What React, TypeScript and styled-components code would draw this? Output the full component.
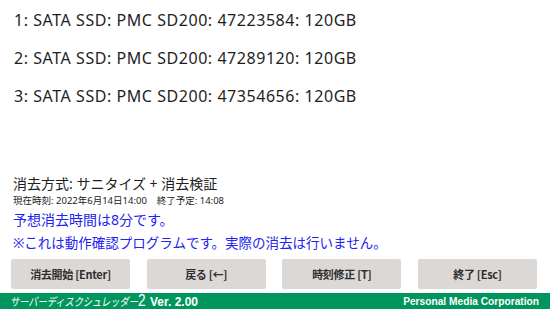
import React from 'react'
import styled, { createGlobalStyle } from 'styled-components'

const GlobalStyle = createGlobalStyle`
  html, body {
    margin: 0;
    padding: 0;
    background: #fff;
  }
  body {
    font-family: "Noto Sans", "Noto Sans CJK JP", sans-serif;
  }
`

const Screen = styled.div`
  width: 550px;
  height: 309px;
  display: flex;
  flex-direction: column;
  background: #fff;
  overflow: hidden;
`

const DriveList = styled.ul`
  list-style: none;
  margin: 0;
  padding: 1px 0 0 14px;
`

const Drive = styled.li`
  font-size: 16px;
  letter-spacing: 0.55px;
  line-height: 38px;
  color: #1e1e1e;
  white-space: nowrap;
`

const Info = styled.div`
  margin-top: auto;
  padding-left: 13px;
  display: flex;
  flex-direction: column;
`

const Method = styled.div`
  font-size: 14px;
  line-height: 20px;
  color: #1e1e1e;
`

const Clock = styled.div`
  font-size: 9.5px;
  line-height: 14px;
  color: #222;
  white-space: pre;
`

const Notice = styled.div<{ $h: number; $size: number }>`
  font-size: ${p => p.$size}px;
  line-height: ${p => p.$h}px;
  color: #2222f2;
  white-space: nowrap;
`

const Buttons = styled.div`
  display: grid;
  grid-template-columns: repeat(4, 119px);
  justify-content: space-between;
  padding: 0 13px 0 11px;
  margin-top: 4px;
`

const Button = styled.button`
  height: 30px;
  border: none;
  border-radius: 2px;
  background: #dcd8d6;
  color: #2e2e2e;
  font-family: "Noto Sans CJK JP", sans-serif;
  font-size: 11px;
  font-weight: 700;
  letter-spacing: -0.3px;
  padding: 0;
  cursor: pointer;
`

const Footer = styled.div`
  margin-top: 4px;
  height: 16px;
  background: #00955c;
  color: #fff;
  display: flex;
  align-items: center;
  justify-content: space-between;
  padding: 0 11px 0 10px;
`

const Brand = styled.div`
  display: flex;
  align-items: baseline;
`

const Product = styled.span`
  display: inline-block;
  font-family: "Noto Sans CJK JP", sans-serif;
  font-size: 11.5px;
  font-style: italic;
  line-height: 16px;
  transform: scaleX(0.8);
  transform-origin: left center;
  width: 140px;
  white-space: nowrap;
`

const Two = styled.span`
  font-family: "Liberation Sans", sans-serif;
  font-size: 17px;
  font-weight: 300;
  font-style: normal;
`

const Version = styled.span`
  font-family: "Liberation Sans", sans-serif;
  font-size: 12px;
  font-weight: 700;
`

const Company = styled.span`
  font-family: "Liberation Sans", sans-serif;
  font-size: 10.2px;
  font-weight: 700;
`

const drives = [
  '1: SATA SSD: PMC SD200: 47223584: 120GB',
  '2: SATA SSD: PMC SD200: 47289120: 120GB',
  '3: SATA SSD: PMC SD200: 47354656: 120GB',
]

const buttons = ['消去開始 [Enter]', '戻る [←]', '時刻修正 [T]', '終了 [Esc]']

const App: React.FC = () => {
  return (
    <Screen>
      <GlobalStyle />
      <DriveList>
        {drives.map(d => (
          <Drive key={d}>{d}</Drive>
        ))}
      </DriveList>
      <Info>
        <Method>消去方式: サニタイズ + 消去検証</Method>
        <Clock>現在時刻: 2022年6月14日14:00    終了予定: 14:08</Clock>
        <Notice $h={23} $size={14}>予想消去時間は8分です。</Notice>
        <Notice $h={24} $size={13.5}>※これは動作確認プログラムです。実際の消去は行いません。</Notice>
      </Info>
      <Buttons>
        {buttons.map(b => (
          <Button key={b}>{b}</Button>
        ))}
      </Buttons>
      <Footer>
        <Brand>
          <Product>
            サーバーディスクシュレッダー<Two>2</Two>
          </Product>
          <Version>Ver. 2.00</Version>
        </Brand>
        <Company>Personal Media Corporation</Company>
      </Footer>
    </Screen>
  )
}

export default App
